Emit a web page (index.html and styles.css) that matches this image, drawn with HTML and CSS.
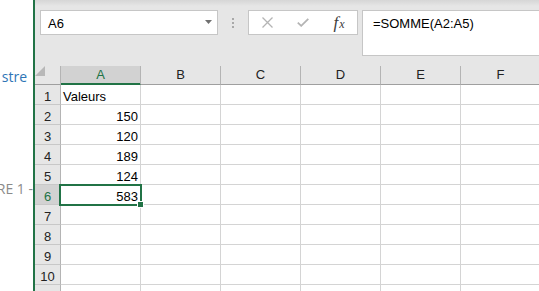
FILE: index.html
```html
<!DOCTYPE html>
<html lang="fr">
<head>
    <meta charset="UTF-8">
    <title>Classeur - SOMME</title>
    <link rel="stylesheet" href="styles.css">
</head>
<body>
    <div class="doc">
        <div class="doc-heading">stre</div>
        <div class="doc-caption">RE 1 -</div>
    </div>
    <div class="excel">
        <div class="toolbar">
            <div class="namebox">
                <span>A6</span>
                <svg class="caret" width="7" height="4" viewBox="0 0 7 4"><polygon points="0,0 7,0 3.5,4" fill="#707070"/></svg>
            </div>
            <div class="grip">
                <svg width="2" height="10" viewBox="0 0 2 10"><rect x="0" y="0" width="2" height="2" fill="#a8a8a8"/><rect x="0" y="4" width="2" height="2" fill="#a8a8a8"/><rect x="0" y="8" width="2" height="2" fill="#a8a8a8"/></svg>
            </div>
            <div class="buttons">
                <div class="btn">
                    <svg width="11" height="11" viewBox="0 0 11 11"><path d="M0.5 0.5 L10.5 10.5 M10.5 0.5 L0.5 10.5" stroke="#b4b4b4" stroke-width="1.3" fill="none"/></svg>
                </div>
                <div class="btn">
                    <svg width="12" height="9" viewBox="0 0 12 9"><path d="M0.8 4.6 L4.2 7.8 L11.3 0.8" stroke="#b4b4b4" stroke-width="1.8" fill="none"/></svg>
                </div>
                <div class="btn fx"><i>f</i><i class="fx-x">x</i></div>
            </div>
            <div class="formula">=SOMME(A2:A5)</div>
        </div>

        <div class="sheet">
            <div class="row head">
                <div class="corner">
                    <svg width="10" height="10" viewBox="0 0 10 10"><polygon points="10,0 10,10 0,10" fill="#b8b8b8"/></svg>
                </div>
                <div class="ch active">A</div>
                <div class="ch">B</div>
                <div class="ch">C</div>
                <div class="ch">D</div>
                <div class="ch">E</div>
                <div class="ch">F</div>
            </div>
            <div class="row">
                <div class="rh">1</div>
                <div class="cell">Valeurs</div>
                <div class="cell"></div><div class="cell"></div><div class="cell"></div><div class="cell"></div><div class="cell"></div>
            </div>
            <div class="row">
                <div class="rh">2</div>
                <div class="cell num">150</div>
                <div class="cell"></div><div class="cell"></div><div class="cell"></div><div class="cell"></div><div class="cell"></div>
            </div>
            <div class="row">
                <div class="rh">3</div>
                <div class="cell num">120</div>
                <div class="cell"></div><div class="cell"></div><div class="cell"></div><div class="cell"></div><div class="cell"></div>
            </div>
            <div class="row">
                <div class="rh">4</div>
                <div class="cell num">189</div>
                <div class="cell"></div><div class="cell"></div><div class="cell"></div><div class="cell"></div><div class="cell"></div>
            </div>
            <div class="row">
                <div class="rh">5</div>
                <div class="cell num">124</div>
                <div class="cell"></div><div class="cell"></div><div class="cell"></div><div class="cell"></div><div class="cell"></div>
            </div>
            <div class="row">
                <div class="rh active">6</div>
                <div class="cell num selected">583<div class="selection"><div class="handle"></div></div></div>
                <div class="cell"></div><div class="cell"></div><div class="cell"></div><div class="cell"></div><div class="cell"></div>
            </div>
            <div class="row">
                <div class="rh">7</div>
                <div class="cell"></div><div class="cell"></div><div class="cell"></div><div class="cell"></div><div class="cell"></div><div class="cell"></div>
            </div>
            <div class="row">
                <div class="rh">8</div>
                <div class="cell"></div><div class="cell"></div><div class="cell"></div><div class="cell"></div><div class="cell"></div><div class="cell"></div>
            </div>
            <div class="row">
                <div class="rh">9</div>
                <div class="cell"></div><div class="cell"></div><div class="cell"></div><div class="cell"></div><div class="cell"></div><div class="cell"></div>
            </div>
            <div class="row">
                <div class="rh">10</div>
                <div class="cell"></div><div class="cell"></div><div class="cell"></div><div class="cell"></div><div class="cell"></div><div class="cell"></div>
            </div>
            <div class="row">
                <div class="rh"></div>
                <div class="cell"></div><div class="cell"></div><div class="cell"></div><div class="cell"></div><div class="cell"></div><div class="cell"></div>
            </div>
        </div>
    </div>
</body>
</html>
```

FILE: styles.css
```css
body {
    margin: 0;
    width: 539px;
    height: 291px;
    overflow: hidden;
    display: flex;
    background: #fff;
    font-family: "Liberation Sans", Arial, sans-serif;
}
.doc {
    width: 33px;
    flex: none;
    border-right: 2px solid #217346;
    overflow: hidden;
    display: flex;
    flex-direction: column;
    align-items: flex-end;
    font-family: "Open Sans", sans-serif;
    font-size: 14px;
    line-height: 20px;
    white-space: nowrap;
}
.doc-heading {
    margin-top: 67px;
    padding-right: 6px;
    color: #2e75b6;
}
.doc-caption {
    margin-top: 92px;
    color: #8a8a8a;
}
.excel {
    flex: 1;
    min-width: 0;
    display: flex;
    flex-direction: column;
    background: #e6e6e6;
}
.toolbar {
    height: 66px;
    flex: none;
    box-sizing: border-box;
    padding: 10px 0 0 5px;
    display: flex;
    align-items: flex-start;
    background: linear-gradient(#d6d6d6, #e6e6e6 6px);
}
.namebox {
    width: 178px;
    height: 25px;
    flex: none;
    box-sizing: border-box;
    border: 1px solid #c6c6c6;
    background: #fff;
    display: flex;
    align-items: flex-start;
    padding: 5px 5px 0 7px;
    font-size: 13px;
    line-height: 15px;
    color: #000;
}
.caret {
    margin: 4px 0 0 auto;
}
.grip {
    width: 30px;
    flex: none;
    display: flex;
    justify-content: center;
    padding-top: 8px;
}
.buttons {
    width: 110px;
    height: 25px;
    flex: none;
    box-sizing: border-box;
    border: 1px solid #c6c6c6;
    background: #fff;
    display: flex;
}
.btn {
    width: 36px;
    display: flex;
    align-items: center;
    justify-content: center;
}
.fx {
    font-family: "Liberation Serif", serif;
    font-size: 17px;
    line-height: 17px;
    color: #3c3c3c;
}
.fx-x {
    font-size: 12px;
    margin-left: 1px;
    padding-top: 4px;
}
.formula {
    flex: 1;
    height: 46px;
    margin: 0 -20px 0 4px;
    box-sizing: border-box;
    border: 1px solid #c6c6c6;
    background: #fff;
    padding: 5px 0 0 10px;
    font-size: 13px;
    line-height: 15px;
    color: #000;
}
.sheet {
    flex: 1;
    background: #fff;
}
.row {
    display: flex;
    height: 20px;
}
.row > div {
    flex: none;
    box-sizing: border-box;
    width: 80px;
    height: 20px;
    border-right: 1px solid #d4d4d4;
    border-bottom: 1px solid #d4d4d4;
    font-size: 13px;
    line-height: 15px;
    padding: 4px 2px 0;
    white-space: nowrap;
}
.row.head {
    height: 19px;
}
.row.head > div {
    height: 19px;
    padding: 0;
    line-height: 18px;
    background: #e6e6e6;
    border-right-color: #b4b4b4;
    border-bottom-color: #9f9f9f;
}
.row > .corner {
    width: 26px;
    padding: 4px 0 0 11px;
}
.corner svg {
    display: block;
}
.ch {
    text-align: center;
    color: #222;
}
.row.head > .ch.active {
    background: #d2d2d2;
    color: #217346;
    border-bottom-color: #217346;
    box-shadow: inset 0 -1px #217346;
}
.row > .rh {
    width: 26px;
    padding: 4px 0 0;
    background: #e6e6e6;
    border-right-color: #b4b4b4;
    border-bottom-color: #c8c8c8;
    text-align: center;
    color: #222;
}
.row > .rh.active {
    background: #d2d2d2;
    color: #217346;
}
.cell {
    color: #000;
}
.num {
    text-align: right;
}
.selected {
    position: relative;
}
.selection {
    position: absolute;
    left: -2px;
    top: -1px;
    right: -2px;
    bottom: -2px;
    border: 2px solid #217346;
}
.handle {
    position: absolute;
    right: -4px;
    bottom: -4px;
    width: 5px;
    height: 5px;
    background: #217346;
    border: 1px solid #fff;
}
```
